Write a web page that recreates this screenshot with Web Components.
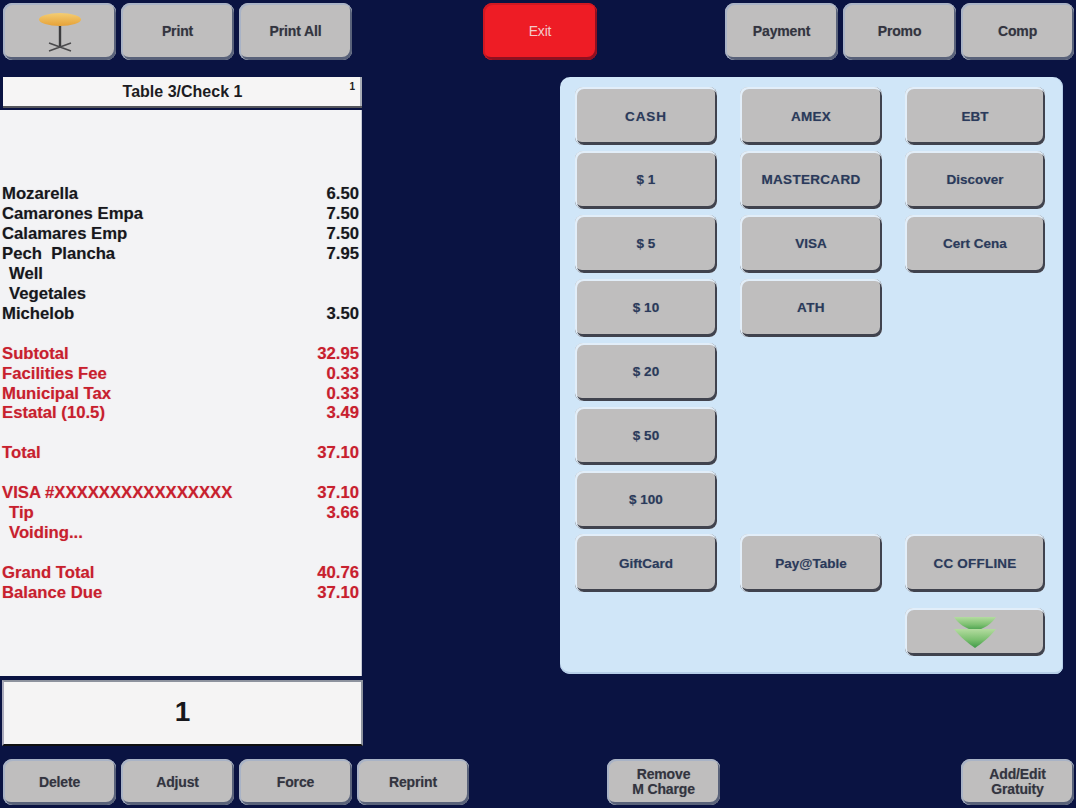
<!DOCTYPE html>
<html><head><meta charset="utf-8">
<style>
html,body{margin:0;padding:0;background:#0a1342;}
body{width:1076px;height:808px;overflow:hidden;font-family:"Liberation Sans",Arial,sans-serif;}
</style></head>
<body>
<template id="t-btn"><style>
:host{display:flex;box-sizing:border-box;width:var(--w,113px);height:var(--h,57px);align-items:center;justify-content:center;text-align:center;
background:#bfbebe;border-radius:9px;color:var(--fg,#33343f);font:bold var(--fs,14px)/15px "Liberation Sans",Arial,sans-serif;
letter-spacing:var(--ls,-.15px);text-shadow:0 0 1px rgba(60,64,80,.4);
box-shadow:inset 1px 1px 0 1px var(--hi,#a9b3c6),inset -1px -2px 0 1px var(--lo,#59627a);padding-bottom:var(--pb,1px);flex:none}
:host([kind=exit]){background:#ee1c25;--hi:#d01822;--lo:#8e1020;--fg:#f3c9c9;font-weight:normal;text-shadow:none}
:host([kind=pay]){--h:58px;--w:142px;--hi:#e2eef9;--lo:#40434e;--fg:#2a3a5c;--fs:13.5px;--pb:0px;--ls:0;border-radius:8px}
</style><slot></slot></template>

<template id="t-top"><style>
:host{display:flex;height:77px;box-sizing:border-box;padding:3px 2px 0 3px;gap:5px}
.sp{width:121px;flex:none}.sp2{width:118px;flex:none}
</style><slot name="a"></slot><div class="sp"></div><slot name="b"></slot><div class="sp2"></div><slot name="c"></slot></template>

<template id="t-title"><style>
:host{display:block;box-sizing:border-box;position:relative;margin-left:3px;width:359px;height:31px;background:#f6f5f5;text-align:center;
font:bold 16px/29px "Liberation Sans",Arial,sans-serif;color:#1c1c22;box-shadow:inset 0 -2px 0 #55565c,inset -2px 0 0 #a9adb6}
.n{position:absolute;right:7px;top:-2px;font-size:10px;line-height:24px}
</style><slot></slot><span class="n">1</span></template>

<template id="t-receipt"><style>
:host{display:block;box-sizing:border-box;width:362px;height:566px;margin-top:2px;background:#f3f3f5;padding-top:74.3px;box-shadow:inset -1px 0 0 #c4c8d4}
</style><slot></slot></template>

<template id="t-line"><style>
:host{display:flex;justify-content:space-between;box-sizing:border-box;height:19.93px;padding:0 3px 0 2px;font:bold 16.7px/19.93px "Liberation Sans",Arial,sans-serif;color:#17171c;white-space:nowrap;text-shadow:0 0 1px rgba(40,40,50,.35)}
:host([red]){color:#c8202e;text-shadow:0 0 1px rgba(200,32,46,.35)}
:host([sub]){padding-left:9px}
</style><span><slot></slot></span><span><slot name="v"></slot></span></template>

<template id="t-qty"><style>
:host{display:flex;box-sizing:border-box;align-items:center;justify-content:center;margin-left:2px;width:361px;height:66px;margin-top:4px;background:#f5f4f4;
border:2px solid;border-color:#8e939e #8e939e #111 #aab;font:bold 28px/1 "Liberation Sans",Arial,sans-serif;color:#17171c;padding-bottom:3px}
</style><slot></slot></template>

<template id="t-bottom"><style>
:host{display:flex;gap:5px;position:absolute;left:3px;top:759px;width:1071px;--h:46px;--pb:0px}
.s1{width:128px;flex:none}.s2{width:231px;flex:none}
</style><slot name="a"></slot><div class="s1"></div><slot name="b"></slot><div class="s2"></div><slot name="c"></slot></template>

<template id="t-panel"><style>
:host{display:grid;position:absolute;left:560px;top:77px;box-sizing:border-box;width:503px;height:597px;background:#d0e6f8;border-radius:10px 10px 8px 10px;
padding:10px 18px 0 15px;grid-template-columns:142px 142px 140px;column-gap:23px;grid-auto-rows:58px;row-gap:5.93px;align-content:start;
box-shadow:inset 0 -2px 0 #b7cfe8,inset -1px 0 0 #b7cfe8}
</style><slot></slot></template>

<script>
const def=(n,t)=>customElements.define(n,class extends HTMLElement{constructor(){super();this.attachShadow({mode:'open'}).appendChild(document.getElementById(t).content.cloneNode(true))}});
def('pos-button','t-btn');def('top-bar','t-top');def('check-title','t-title');def('check-receipt','t-receipt');def('check-line','t-line');def('qty-box','t-qty');def('bottom-bar','t-bottom');def('tender-panel','t-panel');
</script>

<top-bar>
<pos-button slot="a" style="--pb:0px"><svg width="70" height="50" viewBox="0 0 70 50"><defs><linearGradient id="tb" x1="0" y1="0" x2="0" y2="1"><stop offset="0" stop-color="#f4cd72"/><stop offset="1" stop-color="#e6a238"/></linearGradient></defs>
<path d="M35 14V40" stroke="#3c3c3e" stroke-width="2.4"/><path d="M24 36L46 44M46 36L24 44" stroke="#4a4a4c" stroke-width="1.6"/><ellipse cx="35" cy="12.5" rx="21" ry="6.5" fill="url(#tb)"/></svg></pos-button>
<pos-button slot="a">Print</pos-button>
<pos-button slot="a">Print All</pos-button>
<pos-button slot="b" kind="exit" style="--w:114px">Exit</pos-button>
<pos-button slot="c">Payment</pos-button>
<pos-button slot="c">Promo</pos-button>
<pos-button slot="c">Comp</pos-button>
</top-bar>

<check-title>Table 3/Check 1</check-title>
<check-receipt>
<check-line>Mozarella<span slot="v">6.50</span></check-line>
<check-line>Camarones Empa<span slot="v">7.50</span></check-line>
<check-line>Calamares Emp<span slot="v">7.50</span></check-line>
<check-line>Pech&nbsp;&nbsp;Plancha<span slot="v">7.95</span></check-line>
<check-line sub>Well</check-line>
<check-line sub>Vegetales</check-line>
<check-line>Michelob<span slot="v">3.50</span></check-line>
<check-line></check-line>
<check-line red>Subtotal<span slot="v">32.95</span></check-line>
<check-line red>Facilities Fee<span slot="v">0.33</span></check-line>
<check-line red>Municipal Tax<span slot="v">0.33</span></check-line>
<check-line red>Estatal (10.5)<span slot="v">3.49</span></check-line>
<check-line></check-line>
<check-line red>Total<span slot="v">37.10</span></check-line>
<check-line></check-line>
<check-line red>VISA #XXXXXXXXXXXXXXXX<span slot="v">37.10</span></check-line>
<check-line red sub>Tip<span slot="v">3.66</span></check-line>
<check-line red sub>Voiding...</check-line>
<check-line></check-line>
<check-line red>Grand Total<span slot="v">40.76</span></check-line>
<check-line red>Balance Due<span slot="v">37.10</span></check-line>
</check-receipt>
<qty-box>1</qty-box>

<tender-panel>
<pos-button kind="pay" style="--ls:.9px">CASH</pos-button><pos-button kind="pay" style="--ls:.3px">AMEX</pos-button><pos-button kind="pay" style="--w:140px">EBT</pos-button>
<pos-button kind="pay">$ 1</pos-button><pos-button kind="pay" style="--ls:.3px">MASTERCARD</pos-button><pos-button kind="pay" style="--w:140px">Discover</pos-button>
<pos-button kind="pay">$ 5</pos-button><pos-button kind="pay">VISA</pos-button><pos-button kind="pay" style="--w:140px">Cert Cena</pos-button>
<pos-button kind="pay">$ 10</pos-button><pos-button kind="pay" style="--ls:.4px">ATH</pos-button><span></span>
<pos-button kind="pay" style="grid-column:1">$ 20</pos-button>
<pos-button kind="pay" style="grid-column:1">$ 50</pos-button>
<pos-button kind="pay" style="grid-column:1">$ 100</pos-button>
<pos-button kind="pay" style="grid-column:1">GiftCard</pos-button><pos-button kind="pay">Pay@Table</pos-button><pos-button kind="pay" style="--w:140px;--ls:.2px">CC OFFLINE</pos-button>
<pos-button kind="pay" style="grid-column:3;--w:140px;--h:48px;margin-top:9.5px"><svg width="48" height="38" viewBox="0 0 48 38"><defs><linearGradient id="ch" x1="0" y1="0" x2="0" y2="1"><stop offset="0" stop-color="#b4dca0"/><stop offset=".55" stop-color="#7cc070"/><stop offset="1" stop-color="#3f9a48"/></linearGradient></defs>
<path d="M3 4H45C41 11 32 16 24 18C16 16 7 11 3 4Z" fill="url(#ch)"/><path d="M3 16H45C39 24 30 31 24 35C18 31 9 24 3 16Z" fill="url(#ch)"/></svg></pos-button>
</tender-panel>

<bottom-bar>
<pos-button slot="a">Delete</pos-button><pos-button slot="a">Adjust</pos-button><pos-button slot="a">Force</pos-button><pos-button slot="a" style="--w:112px">Reprint</pos-button>
<pos-button slot="b">Remove<br>M Charge</pos-button>
<pos-button slot="c">Add/Edit<br>Gratuity</pos-button>
</bottom-bar>
</body></html>
